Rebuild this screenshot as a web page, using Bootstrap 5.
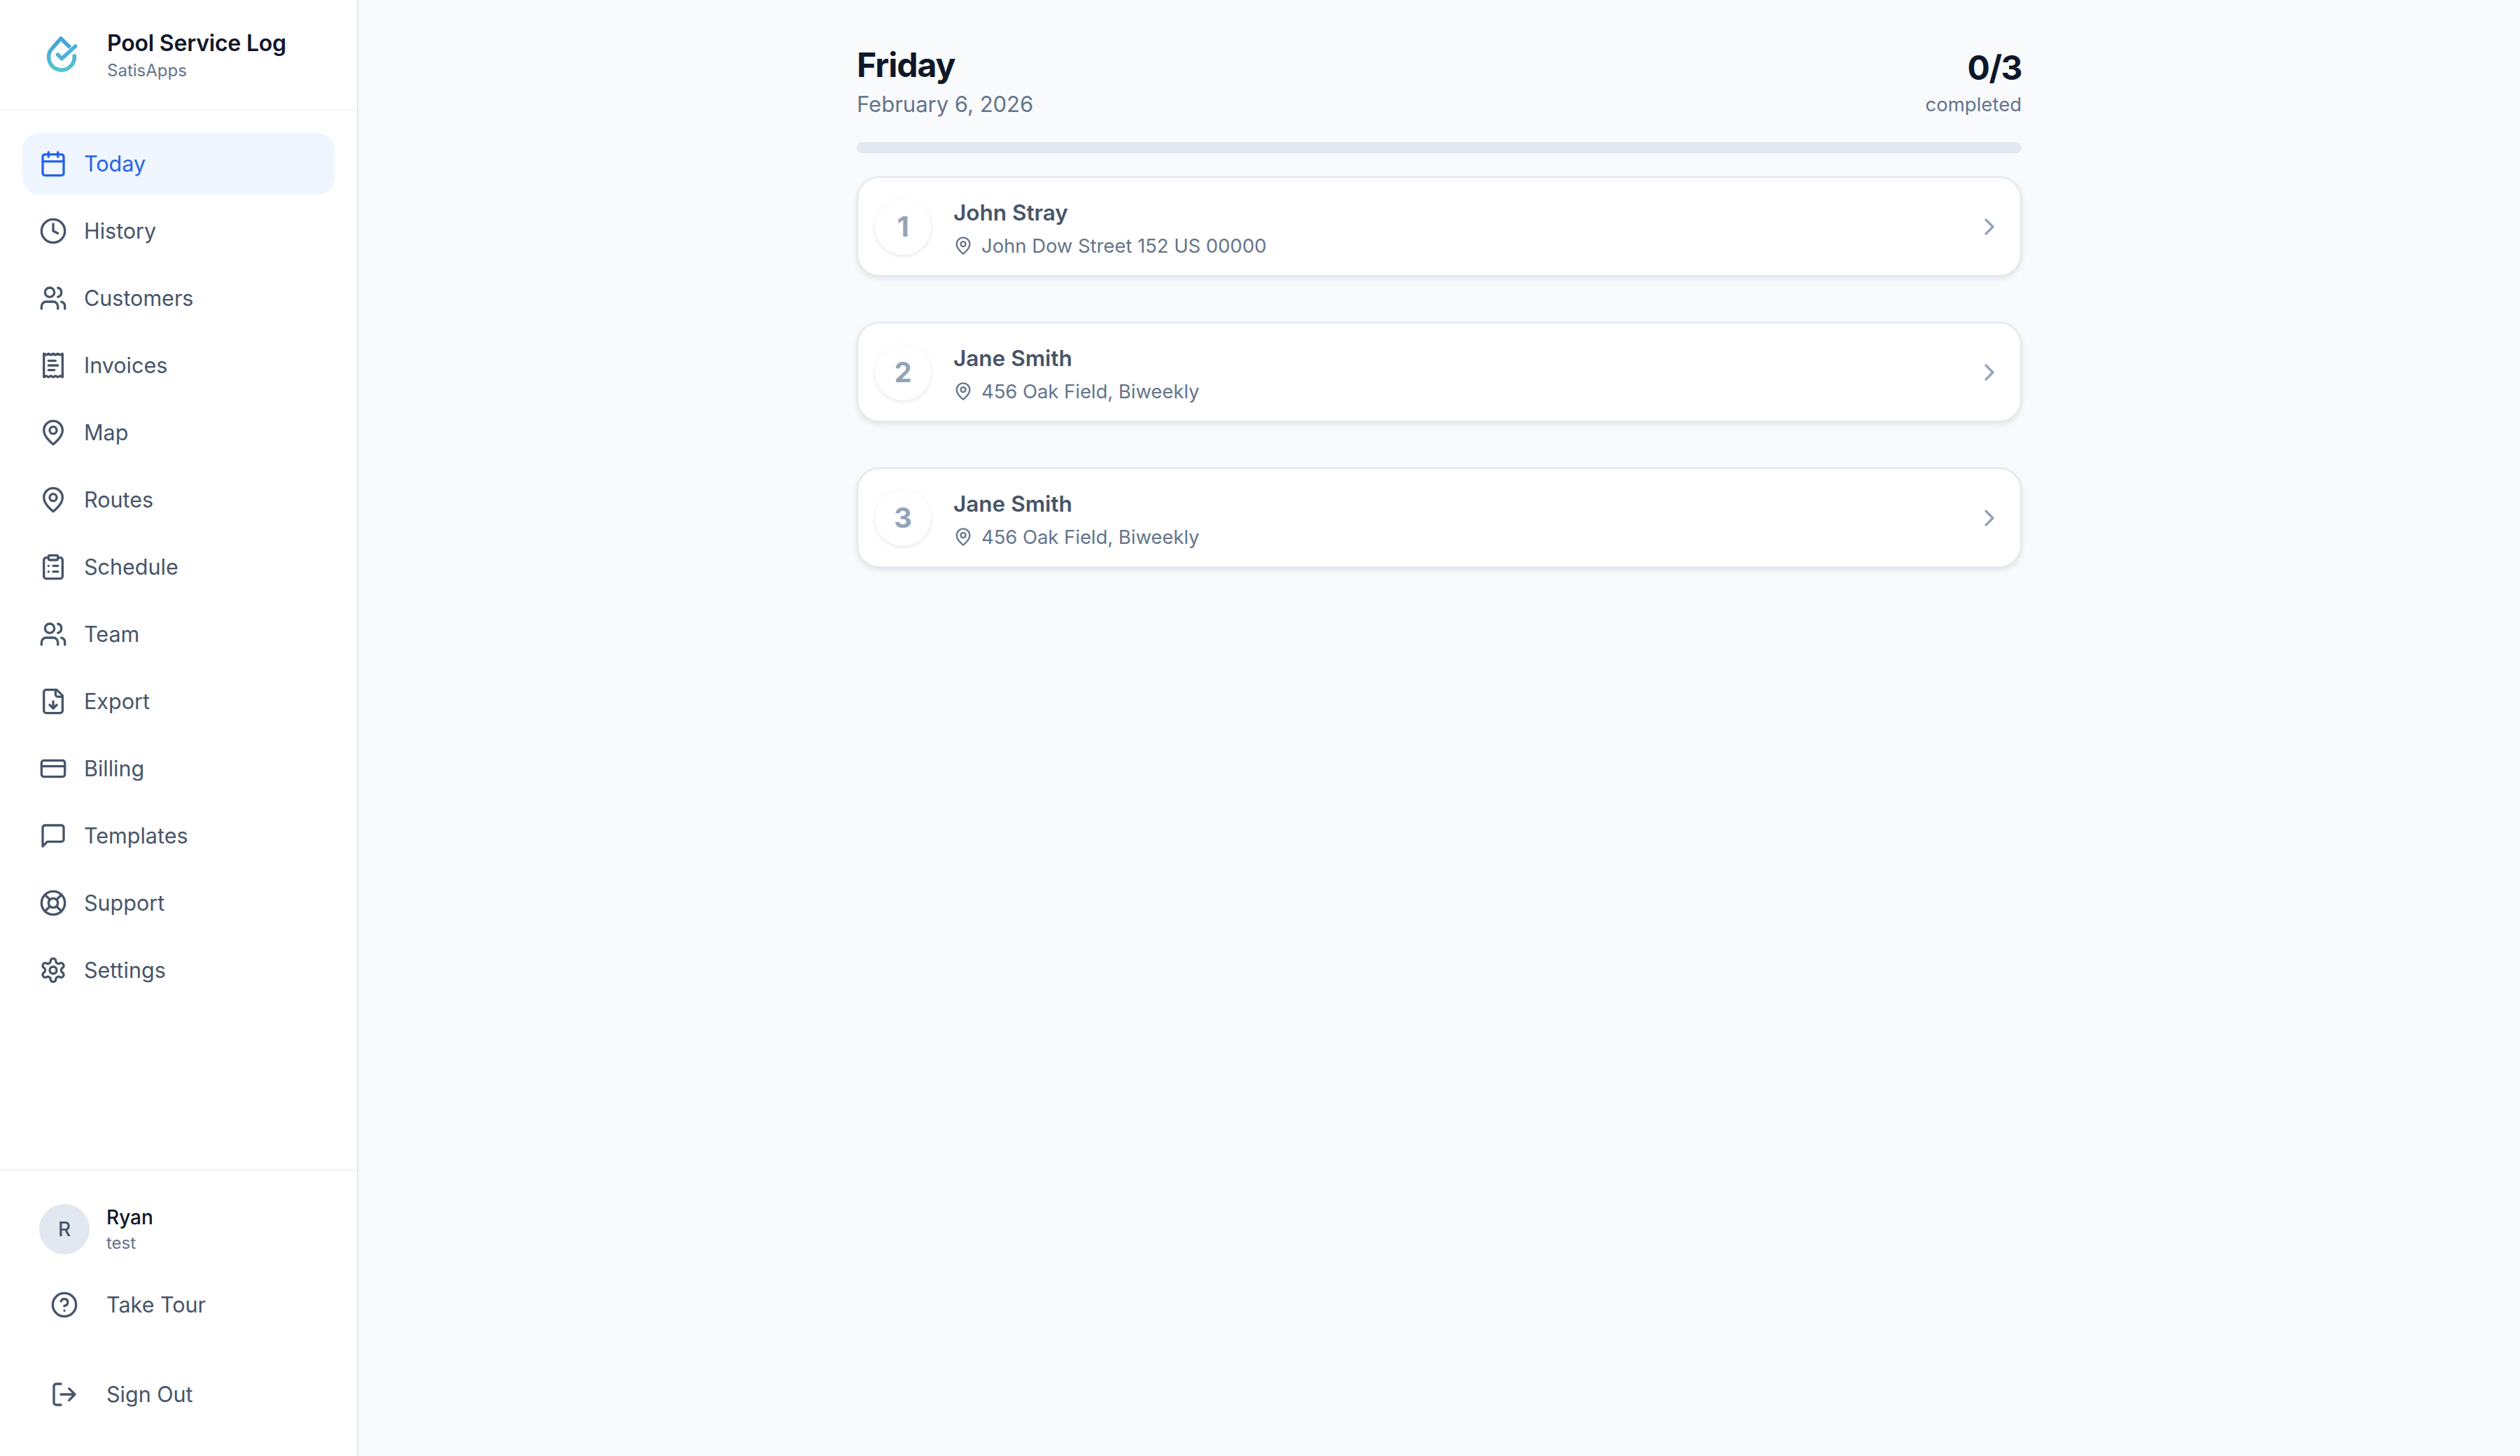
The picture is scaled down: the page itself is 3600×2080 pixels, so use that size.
<!DOCTYPE html>
<html lang="en">

<head>
  <meta charset="UTF-8">
  <meta name="viewport" content="width=device-width, initial-scale=1.0">
  <title>Pool Service Log</title>
  <link href="https://cdn.jsdelivr.net/npm/bootstrap@5.3.0/dist/css/bootstrap.min.css" rel="stylesheet">
  <style>
    body { font-family: Inter, "Liberation Sans", sans-serif; background: #f8fafc; color: #0f172a; }
    .app-shell { height: 2080px; }
    .side-panel { width: 512px; background: #fff; border-right: 2px solid #e2e8f0; }
    .side-head { height: 158px; padding: 0 50px; gap: 28px; border-bottom: 2px solid #f1f5f9; }
    .logo-box { width: 75px; height: 75px; }
    .app-name { font-size: 32px; font-weight: 600; line-height: 44px; letter-spacing: -.2px; }
    .app-org { font-size: 24px; line-height: 32px; margin-top: 1px; color: #64748b; }
    .side-nav { padding: 32px 32px 0; gap: 8px; }
    .side-link { height: 88px; padding: 0 24px; gap: 24px; border-radius: 24px; font-size: 30.500px; color: #475569; text-decoration: none; }
    .side-link.is-active { background: #eff6ff; color: #2563eb; }
    .ico { width: 40px; height: 40px; flex: none; fill: none; stroke: currentColor; stroke-width: 2; stroke-linecap: round; stroke-linejoin: round; }
    .side-foot { height: 410px; border-top: 2px solid #f1f5f9; padding: 48px 32px 0 56px; }
    .avatar-dot { width: 72px; height: 72px; background: #e2e8f0; color: #475569; font-size: 28px; font-weight: 500; }
    .user-name { font-size: 28px; font-weight: 500; line-height: 38px; }
    .user-mail { font-size: 24px; line-height: 32px; margin-top: 2px; color: #64748b; }
    .user-row { margin-bottom: 28px; }
    .foot-link { height: 88px; gap: 40px; padding-left: 16px; font-size: 30.500px; color: #475569; text-decoration: none; }
    .foot-link + .foot-link { margin-top: 40px; }
    .day-col { width: 1664px; padding-top: 62px; margin-left: 712px; }
    .day-name { font-size: 48px; font-weight: 700; line-height: 62px; margin: 0; letter-spacing: -1px; }
    .day-date { font-size: 31px; line-height: 44px; margin-top: 3px; margin-bottom: -3px; color: #64748b; }
    .done-count { font-size: 48px; font-weight: 700; line-height: 62px; margin-top: 4px; letter-spacing: -1.5px; }
    .done-label { font-size: 27.500px; line-height: 38px; margin-top: 2px; color: #64748b; }
    .day-bar { height: 16px; margin-top: 35px; background: #e2e8f0; }
    .stop-list { margin-top: 33px; gap: 65px; }
    .stop-item { height: 143px; padding: 0 24px 0 24px; gap: 32px; border: 2px solid #e2e8f0; border-radius: 32px; box-shadow: 0 3px 8px rgba(15, 23, 42, .1); }
    .stop-num { width: 80px; height: 80px; background: #fff; color: #94a3b8; font-size: 40px; font-weight: 700; box-shadow: 0 2px 6px rgba(15, 23, 42, .1); }
    .stop-text { padding-top: 4px; }
    .stop-name { font-size: 31.500px; font-weight: 600; line-height: 44px; color: #475569; }
    .stop-addr { font-size: 27.400px; line-height: 38px; margin-top: 6px; gap: 12px; color: #64748b; }
    .ico-sm { width: 28px; height: 28px; }
    .ico-go { color: #94a3b8; }
  </style>
</head>

<body>
  <!-- shared lucide style icons -->
  <svg class="d-none">
    <symbol id="i-calendar" viewBox="0 0 24 24"><rect x="3" y="4" width="18" height="18" rx="2"/><path d="M16 2v4M8 2v4M3 10h18"/></symbol>
    <symbol id="i-clock" viewBox="0 0 24 24"><circle cx="12" cy="12" r="10"/><path d="M12 6v6l4 2"/></symbol>
    <symbol id="i-users" viewBox="0 0 24 24"><path d="M16 21v-2a4 4 0 0 0-4-4H6a4 4 0 0 0-4 4v2"/><circle cx="9" cy="7" r="4"/><path d="M22 21v-2a4 4 0 0 0-3-3.87M16 3.13a4 4 0 0 1 0 7.75"/></symbol>
    <symbol id="i-receipt" viewBox="0 0 24 24"><path d="M4 2v20l2-1 2 1 2-1 2 1 2-1 2 1 2-1 2 1V2l-2 1-2-1-2 1-2-1-2 1-2-1-2 1Z"/><path d="M14 8H8M16 12H8M13 16H8"/></symbol>
    <symbol id="i-pin" viewBox="0 0 24 24"><path d="M20 10c0 6-8 12-8 12s-8-6-8-12a8 8 0 0 1 16 0Z"/><circle cx="12" cy="10" r="3"/></symbol>
    <symbol id="i-clipboard" viewBox="0 0 24 24"><rect x="8" y="2" width="8" height="4" rx="1"/><path d="M16 4h2a2 2 0 0 1 2 2v14a2 2 0 0 1-2 2H6a2 2 0 0 1-2-2V6a2 2 0 0 1 2-2h2"/><path d="M12 11h4M12 16h4M8 11h.01M8 16h.01"/></symbol>
    <symbol id="i-file" viewBox="0 0 24 24"><path d="M15 2H6a2 2 0 0 0-2 2v16a2 2 0 0 0 2 2h12a2 2 0 0 0 2-2V7Z"/><path d="M14 2v4a2 2 0 0 0 2 2h4M12 18v-6M9 15l3 3 3-3"/></symbol>
    <symbol id="i-card" viewBox="0 0 24 24"><rect x="2" y="5" width="20" height="14" rx="2"/><path d="M2 10h20"/></symbol>
    <symbol id="i-message" viewBox="0 0 24 24"><path d="M21 15a2 2 0 0 1-2 2H7l-4 4V5a2 2 0 0 1 2-2h14a2 2 0 0 1 2 2z"/></symbol>
    <symbol id="i-buoy" viewBox="0 0 24 24"><circle cx="12" cy="12" r="10"/><circle cx="12" cy="12" r="4"/><path d="m4.93 4.93 4.24 4.24M14.83 9.17l4.24-4.24M14.83 14.83l4.24 4.24M9.17 14.83l-4.24 4.24"/></symbol>
    <symbol id="i-gear" viewBox="0 0 24 24"><path d="M12.22 2h-.44a2 2 0 0 0-2 2v.18a2 2 0 0 1-1 1.73l-.43.25a2 2 0 0 1-2 0l-.15-.08a2 2 0 0 0-2.73.73l-.22.38a2 2 0 0 0 .73 2.73l.15.1a2 2 0 0 1 1 1.72v.51a2 2 0 0 1-1 1.74l-.15.09a2 2 0 0 0-.73 2.73l.22.38a2 2 0 0 0 2.73.73l.15-.08a2 2 0 0 1 2 0l.43.25a2 2 0 0 1 1 1.73V20a2 2 0 0 0 2 2h.44a2 2 0 0 0 2-2v-.18a2 2 0 0 1 1-1.73l.43-.25a2 2 0 0 1 2 0l.15.08a2 2 0 0 0 2.73-.73l.22-.39a2 2 0 0 0-.73-2.73l-.15-.08a2 2 0 0 1-1-1.74v-.5a2 2 0 0 1 1-1.74l.15-.09a2 2 0 0 0 .73-2.73l-.22-.38a2 2 0 0 0-2.73-.73l-.15.08a2 2 0 0 1-2 0l-.43-.25a2 2 0 0 1-1-1.73V4a2 2 0 0 0-2-2z"/><circle cx="12" cy="12" r="3"/></symbol>
    <symbol id="i-help" viewBox="0 0 24 24"><circle cx="12" cy="12" r="10"/><path d="M9.09 9a3 3 0 0 1 5.83 1c0 2-3 3-3 3M12 17h.01"/></symbol>
    <symbol id="i-out" viewBox="0 0 24 24"><path d="M9 21H5a2 2 0 0 1-2-2V5a2 2 0 0 1 2-2h4M16 17l5-5-5-5M21 12H9"/></symbol>
    <symbol id="i-right" viewBox="0 0 24 24"><path d="m9 18 6-6-6-6"/></symbol>
  </svg>

  <div class="app-shell d-flex">
    <!-- Sidebar -->
    <aside class="side-panel d-flex flex-column flex-shrink-0">
      <div class="side-head d-flex align-items-center">
        <svg class="logo-box flex-shrink-0" viewBox="0 0 75 75">
          <defs><linearGradient id="drop-fill" gradientUnits="userSpaceOnUse" x1="37" y1="10" x2="37" y2="62"><stop offset="0" stop-color="#3e9fdc"/><stop offset="1" stop-color="#55c5cd"/></linearGradient></defs>
          <path d="M50.200 27 37 14 24.900 27.600A18.400 18.400 0 1 0 55.900 36.700" fill="none" stroke="url(#drop-fill)" stroke-width="5.500" stroke-linejoin="round"/>
          <path d="M32.500 37 38.300 42.800 57.700 25" fill="none" stroke="#4db3d8" stroke-width="5.500" stroke-linecap="round" stroke-linejoin="round"/>
        </svg>
        <div>
          <div class="app-name">Pool Service Log</div>
          <div class="app-org">SatisApps</div>
        </div>
      </div>

      <nav class="side-nav nav flex-column flex-grow-1 flex-nowrap">
        <a class="side-link is-active d-flex align-items-center" href="#"><svg class="ico"><use href="#i-calendar"/></svg>Today</a>
        <a class="side-link d-flex align-items-center" href="#"><svg class="ico"><use href="#i-clock"/></svg>History</a>
        <a class="side-link d-flex align-items-center" href="#"><svg class="ico"><use href="#i-users"/></svg>Customers</a>
        <a class="side-link d-flex align-items-center" href="#"><svg class="ico"><use href="#i-receipt"/></svg>Invoices</a>
        <a class="side-link d-flex align-items-center" href="#"><svg class="ico"><use href="#i-pin"/></svg>Map</a>
        <a class="side-link d-flex align-items-center" href="#"><svg class="ico"><use href="#i-pin"/></svg>Routes</a>
        <a class="side-link d-flex align-items-center" href="#"><svg class="ico"><use href="#i-clipboard"/></svg>Schedule</a>
        <a class="side-link d-flex align-items-center" href="#"><svg class="ico"><use href="#i-users"/></svg>Team</a>
        <a class="side-link d-flex align-items-center" href="#"><svg class="ico"><use href="#i-file"/></svg>Export</a>
        <a class="side-link d-flex align-items-center" href="#"><svg class="ico"><use href="#i-card"/></svg>Billing</a>
        <a class="side-link d-flex align-items-center" href="#"><svg class="ico"><use href="#i-message"/></svg>Templates</a>
        <a class="side-link d-flex align-items-center" href="#"><svg class="ico"><use href="#i-buoy"/></svg>Support</a>
        <a class="side-link d-flex align-items-center" href="#"><svg class="ico"><use href="#i-gear"/></svg>Settings</a>
      </nav>

      <div class="side-foot">
        <div class="user-row d-flex align-items-center gap-4">
          <div class="avatar-dot rounded-circle d-flex align-items-center justify-content-center flex-shrink-0">R</div>
          <div>
            <div class="user-name">Ryan</div>
            <div class="user-mail">test</div>
          </div>
        </div>
        <a class="foot-link d-flex align-items-center" href="#"><svg class="ico"><use href="#i-help"/></svg>Take Tour</a>
        <a class="foot-link d-flex align-items-center" href="#"><svg class="ico"><use href="#i-out"/></svg>Sign Out</a>
      </div>
    </aside>

    <!-- Today's stops -->
    <main class="day-col flex-shrink-0">
      <div class="d-flex justify-content-between align-items-start">
        <div>
          <h1 class="day-name">Friday</h1>
          <div class="day-date">February 6, 2026</div>
        </div>
        <div class="text-end">
          <div class="done-count">0/3</div>
          <div class="done-label">completed</div>
        </div>
      </div>

      <div class="day-bar progress rounded-pill"></div>

      <div class="stop-list d-flex flex-column">
        <div class="stop-item bg-white d-flex align-items-center">
          <div class="stop-num rounded-circle d-flex align-items-center justify-content-center flex-shrink-0">1</div>
          <div class="stop-text flex-grow-1">
            <div class="stop-name">John Stray</div>
            <div class="stop-addr d-flex align-items-center"><svg class="ico ico-sm"><use href="#i-pin"/></svg>John Dow Street 152 US 00000</div>
          </div>
          <svg class="ico ico-go"><use href="#i-right"/></svg>
        </div>
        <div class="stop-item bg-white d-flex align-items-center">
          <div class="stop-num rounded-circle d-flex align-items-center justify-content-center flex-shrink-0">2</div>
          <div class="stop-text flex-grow-1">
            <div class="stop-name">Jane Smith</div>
            <div class="stop-addr d-flex align-items-center"><svg class="ico ico-sm"><use href="#i-pin"/></svg>456 Oak Field, Biweekly</div>
          </div>
          <svg class="ico ico-go"><use href="#i-right"/></svg>
        </div>
        <div class="stop-item bg-white d-flex align-items-center">
          <div class="stop-num rounded-circle d-flex align-items-center justify-content-center flex-shrink-0">3</div>
          <div class="stop-text flex-grow-1">
            <div class="stop-name">Jane Smith</div>
            <div class="stop-addr d-flex align-items-center"><svg class="ico ico-sm"><use href="#i-pin"/></svg>456 Oak Field, Biweekly</div>
          </div>
          <svg class="ico ico-go"><use href="#i-right"/></svg>
        </div>
      </div>
    </main>
  </div>

  <script src="https://cdn.jsdelivr.net/npm/bootstrap@5.3.0/dist/js/bootstrap.bundle.min.js"></script>
</body>

</html>
